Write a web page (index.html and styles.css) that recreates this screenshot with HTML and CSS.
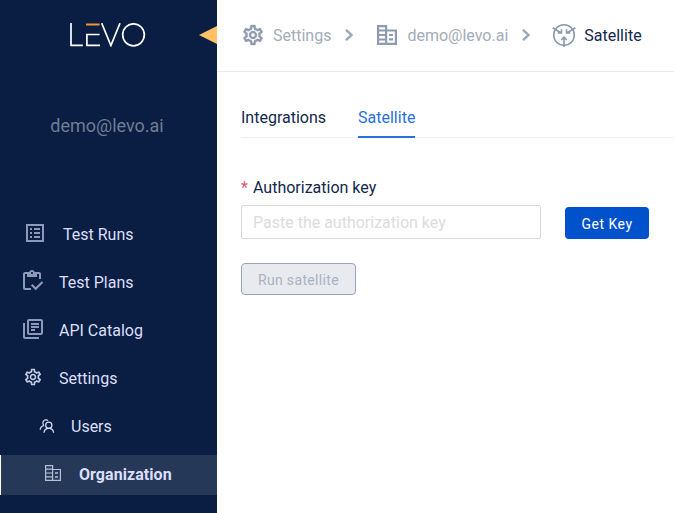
FILE: index.html
```html
<!DOCTYPE html>
<html lang="en">
<head>
<meta charset="utf-8">
<title>Satellite</title>
<link rel="stylesheet" href="styles.css">
</head>
<body>
<svg class="defs" width="0" height="0">
  <symbol id="gear" viewBox="0 0 24 24"><path d="M19.43 12.98c.04-.32.07-.64.07-.98 0-.34-.03-.66-.07-.98l2.11-1.65c.19-.15.24-.42.12-.64l-2-3.46c-.09-.16-.26-.25-.44-.25-.06 0-.12.01-.17.03l-2.49 1c-.52-.4-1.08-.73-1.69-.98l-.38-2.65C14.46 2.18 14.25 2 14 2h-4c-.25 0-.46.18-.49.42l-.38 2.65c-.61.25-1.17.59-1.69.98l-2.49-1c-.06-.02-.12-.03-.18-.03-.17 0-.34.09-.43.25l-2 3.46c-.13.22-.07.49.12.64l2.11 1.65c-.04.32-.07.65-.07.98 0 .33.03.66.07.98l-2.11 1.65c-.19.15-.24.42-.12.64l2 3.46c.09.16.26.25.44.25.06 0 .12-.01.17-.03l2.49-1c.52.4 1.08.73 1.69.98l.38 2.65c.03.24.24.42.49.42h4c.25 0 .46-.18.49-.42l.38-2.65c.61-.25 1.17-.59 1.69-.98l2.49 1c.06.02.12.03.18.03.17 0 .34-.09.43-.25l2-3.46c.12-.22.07-.49-.12-.64l-2.11-1.65zm-1.98-1.71c.04.31.05.52.05.73 0 .21-.02.43-.05.73l-.14 1.13.89.7 1.08.84-.7 1.21-1.27-.51-1.04-.42-.9.68c-.43.32-.84.56-1.25.73l-1.06.43-.16 1.13-.2 1.35h-1.4l-.19-1.35-.16-1.13-1.06-.43c-.43-.18-.83-.41-1.23-.71l-.91-.7-1.06.43-1.27.51-.7-1.21 1.08-.84.89-.7-.14-1.13c-.03-.31-.05-.54-.05-.74s.02-.43.05-.73l.14-1.13-.89-.7-1.08-.84.7-1.21 1.27.51 1.04.42.9-.68c.43-.32.84-.56 1.25-.73l1.06-.43.16-1.13.2-1.35h1.39l.19 1.35.16 1.13 1.06.43c.43.18.83.41 1.23.71l.91.7 1.06-.43 1.27-.51.7 1.21-1.07.85-.89.7.14 1.13zM12 8c-2.21 0-4 1.79-4 4s1.79 4 4 4 4-1.79 4-4-1.79-4-4-4zm0 6c-1.1 0-2-.9-2-2s.9-2 2-2 2 .9 2 2-.9 2-2 2z"/></symbol>
</svg>
<div class="app">
  <aside class="sidebar">
    <div class="brand">
      <svg class="logo" width="76" height="24" viewBox="0 0 76 24" fill="none" stroke="#fff" stroke-width="1.7">
        <path d="M1 0v22.3h11.800M29.600 11.500H16.900v10.800H30M31.700.2l9.200 22.300L50 .2"/>
        <ellipse cx="63.500" cy="11.800" rx="10.800" ry="11"/>
        <path d="M16 1.500h13.600" stroke="#f7922f" stroke-width="2"/>
      </svg>
      <svg class="collapse" width="18" height="18" viewBox="0 0 18 18"><path d="M0 9 18 0v18z" fill="#ffc163"/></svg>
    </div>
    <div class="account">demo@levo.ai</div>
    <nav class="menu">
      <a class="item runs"><svg width="24" height="24" viewBox="0 0 24 24"><path fill-rule="evenodd" d="M3 3h18v18H3zM5 5v14h14V5zM7 7h2v2H7zM7 11h2v2H7zM7 15h2v2H7zM11 7h6v2h-6zM11 11h6v2h-6zM11 15h6v2h-6z"/></svg><span>Test Runs</span></a>
      <a class="item plans"><svg width="24" height="24" viewBox="0 0 24 24"><path d="M5 5h2v3h10V5h2v5h2V5c0-1.100-.9-2-2-2h-4.180C14.400 1.840 13.300 1 12 1S9.600 1.840 9.180 3H5c-1.100 0-2 .9-2 2v14c0 1.100.9 2 2 2h6v-2H5V5zm7-2c.55 0 1 .45 1 1s-.45 1-1 1-1-.45-1-1 .45-1 1-1zM21.750 12.250l-6.010 6.010-3.250-3.250L11 16.500l4.740 4.750 7.510-7.500z"/></svg><span>Test Plans</span></a>
      <a class="item catalog"><svg width="24" height="24" viewBox="0 0 24 24"><path d="M4 6H2v14c0 1.100.9 2 2 2h14v-2H4V6zm16-4H8c-1.100 0-2 .9-2 2v12c0 1.100.9 2 2 2h12c1.100 0 2-.9 2-2V4c0-1.100-.9-2-2-2zm0 14H8V4h12v12zM10 9h8v2h-8V9zm0 3h4v2h-4v-2zm0-6h8v2h-8V6z"/></svg><span>API Catalog</span></a>
      <a class="item settings"><svg width="20" height="20"><use href="#gear"/></svg><span>Settings</span></a>
      <a class="item users"><svg width="16" height="16" viewBox="0 0 16 16" fill="none" stroke="#d5daf3" stroke-width="1.250"><circle cx="9.800" cy="7.200" r="3.100"/><path d="M5 14.800c.2-2.700 2.100-4.500 4.800-4.500s4.600 1.800 4.800 4.500M5.200 7.600A3.100 3.100 0 1 1 9 2.400M1.200 11.700c.2-2.200 1.500-3.800 4-4.100"/></svg><span>Users</span></a>
      <a class="item organization"><svg width="16" height="16" viewBox="0 0 16 16" fill="none" stroke="#b5bfd5" stroke-width="1.200"><path d="M.6.6h7v14.800h-7zM7.500 4.500h7.900v10.900H7.500M0 4.200h8M0 8h8M0 11.800h8" /><path d="M10 8h3M10 12h3" stroke-width="1.500"/></svg><span>Organization</span></a>
    </nav>
  </aside>
  <main class="main">
    <header class="crumbs">
      <svg class="crumb-icon" width="24" height="24"><use href="#gear"/></svg>
      <span>Settings</span>
      <svg class="chevron first" width="10" height="12" viewBox="0 0 10 12"><path d="m2 .8 5.500 5.200L2 11.200"/></svg>
      <svg class="building" width="20" height="20" viewBox="0 0 20 20" fill="none" stroke="#8f9bb1" stroke-width="2.200"><path d="M1.100 1.100h8v17.800h-8zM9 5.500h9.900v13.400H9M0 5.500h9M0 10h9M0 14.500h9"/><path d="M12 10h4M12 14.400h4"/></svg>
      <span>demo@levo.ai</span>
      <svg class="chevron second" width="10" height="12" viewBox="0 0 10 12"><path d="m2 .8 5.500 5.200L2 11.200"/></svg>
      <svg class="satellite" width="24" height="24" viewBox="0 0 24 24" fill="none" stroke="#8c99ae" stroke-width="1.600"><circle cx="12" cy="12" r="10.300"/><path d="m.6 4.800 8.700 5.200M9.500 6.200V10H5.700M23.400 4.800 14.700 10M14.500 6.200V10h3.800M12 24v-9.500M9.200 17l2.800-2.800 2.800 2.800"/></svg>
      <strong>Satellite</strong>
    </header>
    <div class="tabs"><a>Integrations</a><a class="active">Satellite</a></div>
    <form class="form">
      <label for="key"><i>*</i>Authorization key</label>
      <div class="row"><input id="key" type="text" placeholder="Paste the authorization key"><button class="primary" type="button">Get Key</button></div>
      <button class="disabled" type="button" disabled>Run satellite</button>
    </form>
  </main>
</div>
</body>
</html>
```
FILE: styles.css
```css
* { box-sizing: border-box; }
body {
  margin: 0;
  font: 16px/24px Roboto, sans-serif;
  color: #12284c;
  background: #fff;
  overflow: hidden;
}
.defs { display: none; }
.app { display: flex; height: 513px; }
svg { flex: none; }

.sidebar { width: 217px; flex: none; background: #091e42; color: #dcdffb; }
.brand { display: flex; justify-content: space-between; height: 72px; padding: 23px 0 0 70px; }
.collapse { margin-top: 3px; }
.account { height: 138px; padding-top: 41px; padding-right: 3px; font-size: 18px; line-height: 26px; text-align: center; color: #6f7d94; }
.menu { display: flex; flex-direction: column; gap: 8px; padding-top: 5px; }
.item { display: flex; align-items: center; height: 40px; fill: #8d99b8; }
.item svg { margin-bottom: 2px; }
.runs { padding-left: 23px; }
.runs span { margin-left: 16px; }
.item.runs svg { margin-bottom: 4px; }
.plans { padding-left: 20px; }
.plans span { margin-left: 15px; }
.item.plans svg { margin-bottom: 4px; }
.catalog { padding-left: 21px; }
.catalog span { margin-left: 14px; }
.item.catalog svg { margin-bottom: 4px; }
.settings { padding-left: 23px; fill: #c3cae3; }
.settings span { margin-left: 16px; }
.item.settings svg { margin-bottom: 4px; }
.users { padding-left: 39px; }
.users span { margin-left: 16px; }
.organization { padding-left: 44px; border-left: 1px solid #fff; background: #253858; font-weight: 700; letter-spacing: .06px; }
.organization span { margin-left: 18px; }
.item.organization svg { margin-bottom: 4px; }

.main { flex: 1; min-width: 0; }
.crumbs { display: flex; align-items: center; height: 72px; padding: 0 0 1px 24px; border-bottom: 1px solid #e9eaef; color: #a4acba; white-space: nowrap; }
.crumbs span, .crumbs strong { padding-top: 2px; }
.crumb-icon { fill: #8f9bb1; stroke: #8f9bb1; stroke-width: .4; margin-right: 8px; }
.chevron { fill: none; stroke: #9ca6b8; stroke-width: 2.4; }
.chevron.first { margin: 0 23px 0 13px; }
.building { margin-right: 10px; }
.chevron.second { margin: 0 21px 0 13px; }
.satellite { margin-right: 8px; }
.crumbs strong { font-weight: 400; color: #12284c; }

.tabs { display: flex; gap: 32px; height: 66px; margin-left: 24px; padding-top: 34px; border-bottom: 1px solid #f0f0f0; }
.tabs a { height: 32px; }
.tabs .active { color: #2a6fdb; border-bottom: 2px solid #2a6fdb; }

.form { padding: 38px 0 0 24px; }
.form label { display: flex; height: 29px; }
.form i { width: 12px; color: #e5566d; font: 16px/24px Roboto, sans-serif; }
.row { display: flex; gap: 24px; align-items: flex-end; }
input { width: 300px; height: 34px; padding: 0 11px; border: 1px solid #d9d9d9; border-radius: 2px; font: 16px Roboto, sans-serif; }
input::placeholder { color: #dcdcdc; opacity: 1; }
button { height: 32px; padding: 2px 0 0; border-radius: 4px; font: 14px Roboto, sans-serif; letter-spacing: .35px; }
.primary { width: 84px; border: 0; background: #0052cc; color: #fff; letter-spacing: .5px; }
.disabled { display: block; width: 115px; margin-top: 24px; border: 1px solid #97a2b5; background: #e9eaef; color: #a9b2c1; }
```
